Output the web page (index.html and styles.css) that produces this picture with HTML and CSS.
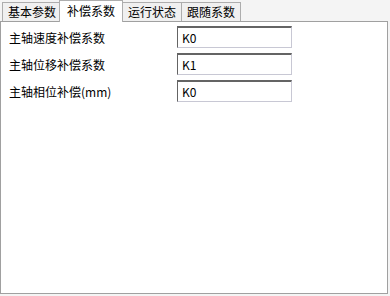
FILE: index.html
```html
<!DOCTYPE html>
<html lang="zh-CN">
<head>
    <meta charset="UTF-8">
    <title>补偿系数</title>
    <link rel="stylesheet" href="styles.css">
</head>
<body>
    <div class="tabs">
        <div class="tab">基本参数</div>
        <div class="tab active">补偿系数</div>
        <div class="tab">运行状态</div>
        <div class="tab">跟随系数</div>
    </div>
    <div class="panel">
        <div class="row">
            <label>主轴速度补偿系数</label>
            <input type="text" value="K0">
        </div>
        <div class="row">
            <label>主轴位移补偿系数</label>
            <input type="text" value="K1">
        </div>
        <div class="row">
            <label>主轴相位补偿(mm)</label>
            <input type="text" value="K0">
        </div>
    </div>
</body>
</html>
```

FILE: styles.css
```css
body { margin: 0; width: 390px; height: 296px; background: #f4f4f4; font-family: "Microsoft YaHei", "Noto Sans CJK SC", sans-serif; font-size: 12px; color: #000; overflow: hidden; }
.tabs { display: flex; align-items: flex-end; height: 21px; padding-left: 2px; position: relative; z-index: 1; }
.tab { height: 18px; line-height: 18px; padding: 0 5px; border: 1px solid #adadad; border-bottom: none; background: #f0f0f0; margin-right: -1px; }
.tab.active { height: 21px; line-height: 20px; padding: 0 7px; margin: 0 -1px 0 -2px; background: #fff; position: relative; top: 1px; }
.panel { width: 386px; height: 267px; border: 1px solid #a0a0a0; background: #fff; padding-top: 4px; }
.row { display: flex; align-items: center; height: 22px; margin-bottom: 5px; padding-left: 8px; }
.row label { width: 168px; }
.row input { width: 115px; height: 22px; box-sizing: border-box; border: 1px solid #c8c8d4; border-top: 2px solid #646464; border-left-color: #646464; padding: 0 4px; font-family: "Microsoft YaHei", "Noto Sans CJK SC", sans-serif; font-size: 12px; outline: none; }
```
